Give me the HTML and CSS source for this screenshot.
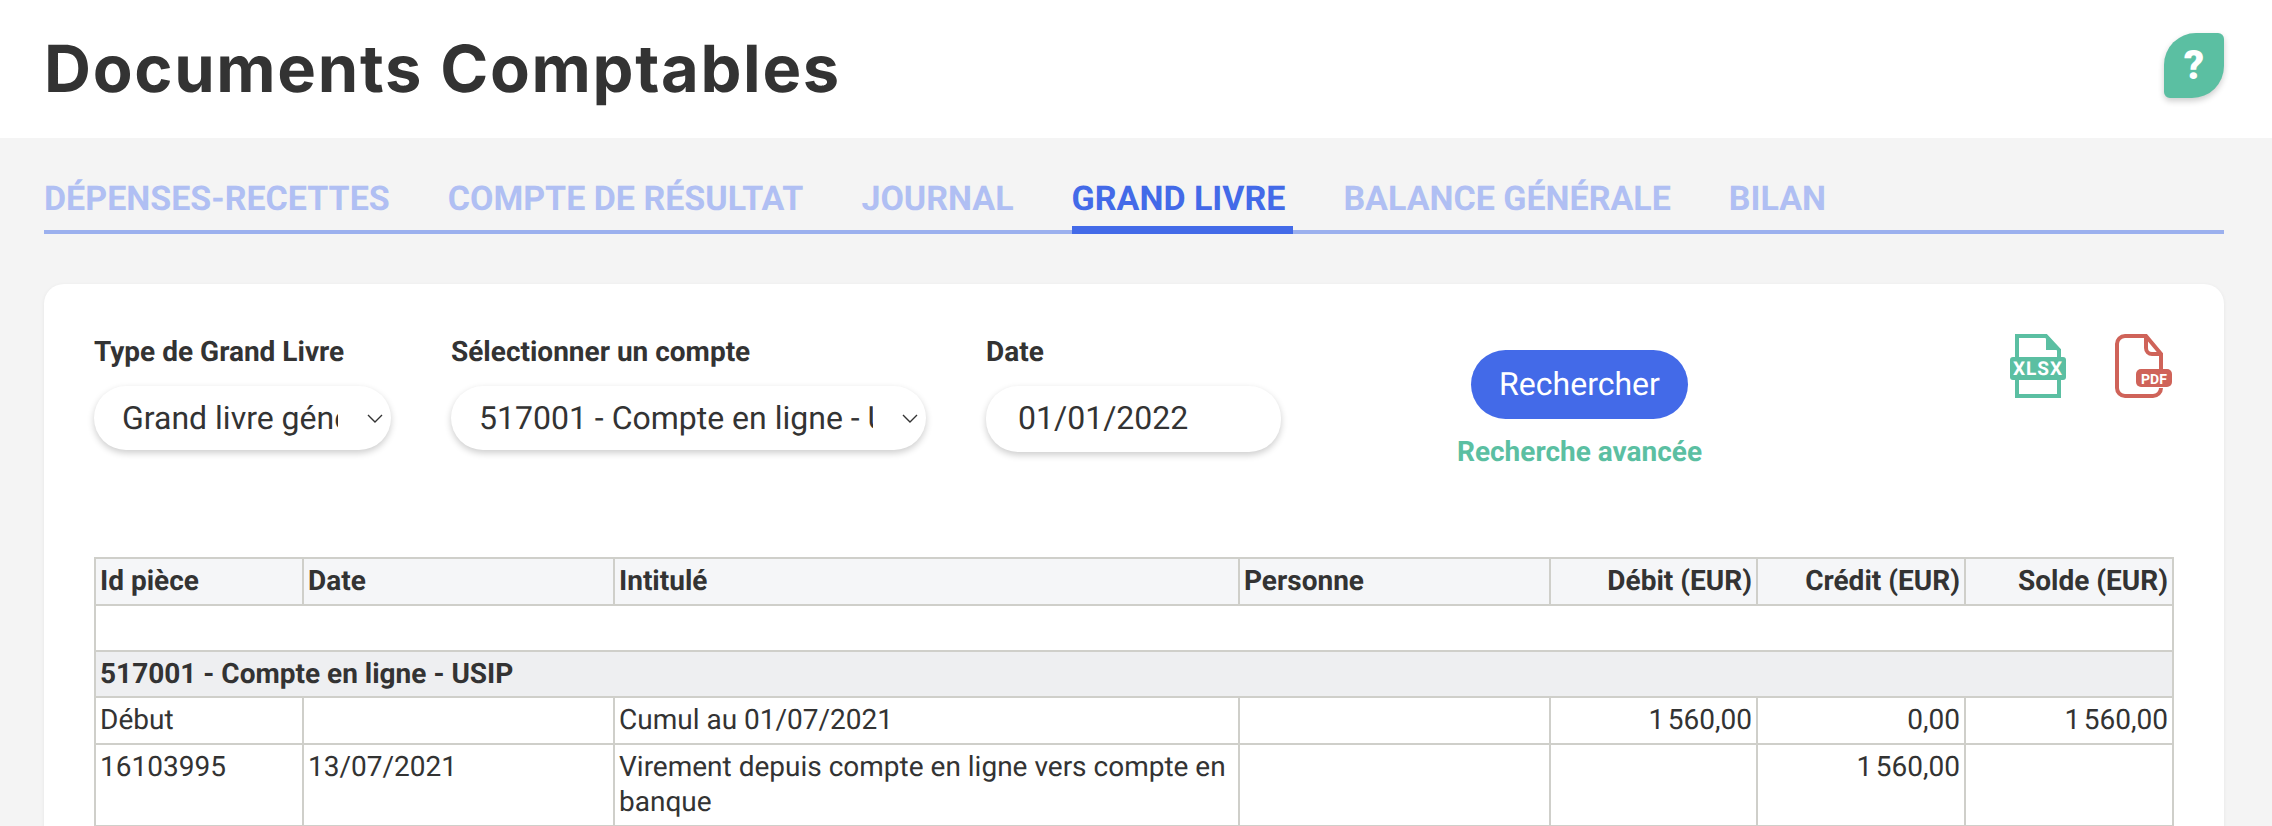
FILE: index.html
```html
<!DOCTYPE html>
<html lang="fr">
<head>
<meta charset="utf-8">
<title>Documents Comptables</title>
<link rel="stylesheet" href="styles.css">
</head>
<body>
<header class="top">
  <h1 class="title">Documents Comptables</h1>
  <button class="help" type="button">?</button>
</header>
<main class="main">
  <nav class="tabs">
    <a class="tab">DÉPENSES-RECETTES</a>
    <a class="tab">COMPTE DE RÉSULTAT</a>
    <a class="tab">JOURNAL</a>
    <a class="tab active">GRAND LIVRE</a>
    <a class="tab">BALANCE GÉNÉRALE</a>
    <a class="tab">BILAN</a>
  </nav>
  <section class="card">
    <div class="filters">
      <div class="field f-type">
        <label class="label">Type de Grand Livre</label>
        <div class="select-wrap">
          <select class="control select"><option>Grand livre général</option></select>
          <svg class="chev" viewBox="0 0 16 10" width="16" height="10"><path d="M1 1l7 7 7-7" fill="none" stroke="#333" stroke-width="1.4"/></svg>
        </div>
      </div>
      <div class="field f-account">
        <label class="label">Sélectionner un compte</label>
        <div class="select-wrap">
          <select class="control select"><option>517001 - Compte en ligne - USIP</option></select>
          <svg class="chev" viewBox="0 0 16 10" width="16" height="10"><path d="M1 1l7 7 7-7" fill="none" stroke="#333" stroke-width="1.4"/></svg>
        </div>
      </div>
      <div class="field f-date">
        <label class="label">Date</label>
        <input class="control date" type="text" value="01/01/2022">
      </div>
      <div class="actions">
        <button class="search" type="button">Rechercher</button>
        <a class="advanced">Recherche avancée</a>
      </div>
      <div class="exports">
        <svg class="ico" viewBox="0 0 56 64" width="56" height="64">
          <path d="M7 23V2h29l13 14v7M7 46v16h42V46" fill="none" stroke="#5bbfa2" stroke-width="4"/>
          <path d="M36 0l14 16H36z" fill="#5bbfa2"/>
          <rect x="0" y="23" width="56" height="23" rx="3" fill="#5bbfa2"/>
          <text class="ico-x" x="28" y="41" text-anchor="middle">XLSX</text>
        </svg>
        <svg class="ico" viewBox="0 0 58 64" width="58" height="64">
          <path d="M47 35V20L32 2H11a8 8 0 0 0-8 8v44a8 8 0 0 0 8 8h28a8 8 0 0 0 8-8" fill="none" stroke="#cf6359" stroke-width="4"/>
          <path d="M32 2v12a6 6 0 0 0 6 6h9" fill="none" stroke="#cf6359" stroke-width="4"/>
          <rect x="22" y="35" width="36" height="18" rx="5" fill="#cf6359"/>
          <text class="ico-p" x="40" y="49.500" text-anchor="middle">PDF</text>
        </svg>
      </div>
    </div>
    <table class="ledger">
      <colgroup>
        <col class="c1"><col class="c2"><col class="c3"><col class="c4"><col class="c5"><col class="c6"><col class="c7">
      </colgroup>
      <thead>
        <tr><th>Id pièce</th><th>Date</th><th>Intitulé</th><th>Personne</th><th class="num">Débit (EUR)</th><th class="num">Crédit (EUR)</th><th class="num">Solde (EUR)</th></tr>
      </thead>
      <tbody>
        <tr class="blank"><td colspan="7"></td></tr>
        <tr class="group"><td colspan="7">517001 - Compte en ligne - USIP</td></tr>
        <tr><td>Début</td><td></td><td>Cumul au 01/07/2021</td><td></td><td class="num">1&#8239;560,00</td><td class="num">0,00</td><td class="num">1&#8239;560,00</td></tr>
        <tr><td>16103995</td><td>13/07/2021</td><td>Virement depuis compte en ligne vers compte en banque</td><td></td><td class="num"></td><td class="num">1&#8239;560,00</td><td class="num"></td></tr>
      </tbody>
    </table>
  </section>
</main>
</body>
</html>
```
FILE: styles.css
```css
* { box-sizing: border-box; }
html, body { margin: 0; height: 826px; overflow: hidden; }
body { background: #f4f4f4; color: #333; font-family: Roboto, "Liberation Sans", sans-serif; text-rendering: geometricPrecision; }

.top { height: 138px; background: #fff; display: flex; align-items: flex-start; justify-content: space-between; padding: 33px 48px 0 44px; }
.title { margin: 3px 0 0; font-family: Inter, "Noto Sans", sans-serif; font-size: 65px; line-height: 66px; font-weight: 700; letter-spacing: 1.7px; color: #333; }
.help { width: 60px; height: 65px; border: 0; padding: 0; background: #5bbfa2; color: #fff; font: 900 40px/65px Roboto, sans-serif; border-radius: 32px 6px 32px 6px; box-shadow: 0 3px 6px rgba(0,0,0,.2); }

.main { padding: 40px 48px 0 44px; }
.tabs { display: flex; gap: 58px; border-bottom: 4px solid #9bb0ee; height: 56px; }
.tab { font-size: 34px; font-weight: 700; line-height: 42px; height: 56px; color: #b0bff3; white-space: nowrap; }
.tab.active { color: #436ae8; border-bottom: 8px solid #436ae8; padding: 0 8px 0 0; margin-right: -8px; }

.card { margin-top: 50px; background: #fff; border-radius: 20px; padding: 50px 52px 0 50px; height: 600px; box-shadow: 0 1px 4px rgba(0,0,0,.06); }
.filters { display: flex; height: 223px; align-items: flex-start; }
.field { display: flex; flex-direction: column; gap: 16px; }
.label { font-size: 28px; line-height: 36px; font-weight: 700; }
.f-type { width: 297px; margin-right: 60px; }
.f-account { width: 475px; margin-right: 60px; }
.f-date { width: 295px; margin-right: 190px; }
.select-wrap { position: relative; }
.control { width: 100%; height: 64px; border: 0; outline: 0; background: #fff; border-radius: 32px; box-shadow: 0 3px 7px rgba(0,0,0,.2); color: #333; font-family: Roboto, sans-serif; font-size: 32px; text-rendering: geometricPrecision; }
.select { appearance: none; -webkit-appearance: none; padding: 0 53px 0 28px; }
.date { padding: 0 32px 2px; height: 66px; }
.chev { position: absolute; right: 8px; top: 28px; }
.actions { width: 217px; display: flex; flex-direction: column; align-items: center; padding-top: 16px; }
.search { width: 217px; height: 69px; border: 0; border-radius: 35px; background: #436ae8; color: #fff; font: 400 32px/69px Roboto, sans-serif; padding: 0; text-rendering: geometricPrecision; }
.advanced { margin-top: 16px; font-size: 28px; line-height: 34px; font-weight: 700; color: #5bbfa2; white-space: nowrap; }
.exports { margin-left: auto; display: flex; gap: 48px; }
.ico { display: block; }
.ico-x { font: 700 19px Roboto, sans-serif; fill: #fff; letter-spacing: 1px; }
.ico-p { font: 700 14px Roboto, sans-serif; fill: #fff; }

.ledger { width: 2078px; border-collapse: collapse; table-layout: fixed; font-size: 28px; line-height: 35px; }
.c1 { width: 208px; } .c2 { width: 311px; } .c3 { width: 625px; } .c4 { width: 311px; }
.c5 { width: 207px; } .c6 { width: 208px; } .c7 { width: 208px; }
.ledger th, .ledger td { border: 2px solid #cfcfca; padding: 4px 4px 6px 4px; text-align: left; vertical-align: top; }
.ledger th { background: #f5f6f8; font-weight: 700; }
.ledger .num { text-align: right; }
.blank td { height: 46px; }
.group td { background: #eeeff1; font-weight: 700; padding-bottom: 5px; }
```
